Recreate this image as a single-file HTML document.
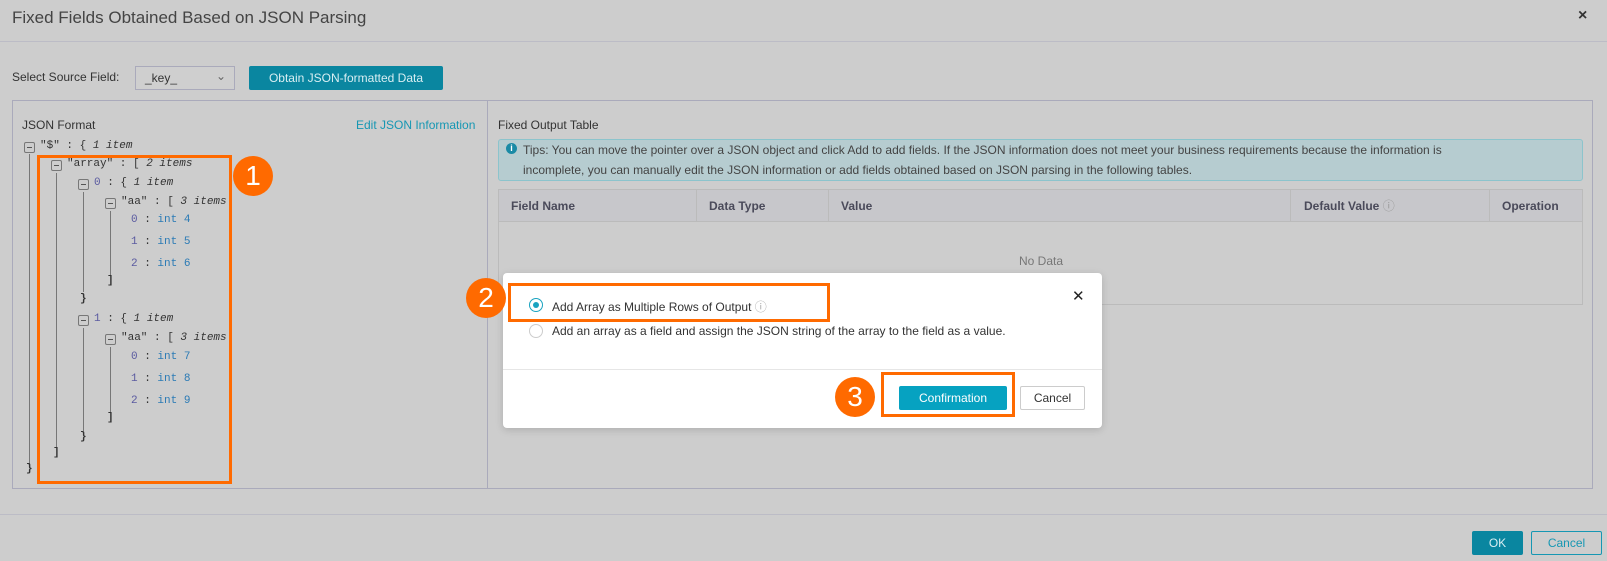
<!DOCTYPE html>
<html><head><meta charset="utf-8"><style>
*{box-sizing:border-box;margin:0;padding:0}
body{width:1607px;height:561px;background:#cdcdcd;font-family:"Liberation Sans",sans-serif;font-size:12px;color:#333;position:relative;overflow:hidden}
.a{position:absolute;white-space:nowrap}
.t{font-family:"Liberation Mono",monospace;font-size:11px;color:#333}
.k{color:#5a5aa0}.v{color:#2a7ab5}
.tg{position:absolute;width:11px;height:11px;border:1px solid #777;border-radius:2px}
.tg:after{content:"";position:absolute;left:2px;right:2px;top:4px;height:1px;background:#555}
.vl{position:absolute;width:1px;background:#777}
.ob{position:absolute;border:3px solid #ff6a00}
.ci{position:absolute;width:40px;height:40px;border-radius:50%;background:#ff6a00;color:#fff;font-size:28px;text-align:center;line-height:40px}
.th{position:absolute;top:190px;height:32px;line-height:32px;font-weight:bold;color:#4a4a5a}
.cb{position:absolute;top:190px;height:32px;width:1px;background:#bbb}
</style></head><body>
<div class="a" style="left:12px;top:8px;font-size:17px;color:#444">Fixed Fields Obtained Based on JSON Parsing</div>
<div class="a" style="left:1578px;top:7px;font-size:16px;font-weight:bold">×</div>
<div class="a" style="left:0;top:41px;width:1607px;height:1px;background:#bcbcc6"></div>
<div class="a" style="left:12px;top:70px">Select Source Field:</div>
<div class="a" style="left:135px;top:66px;width:100px;height:24px;border:1px solid #aab;background:#cfcfcf;padding:4px 9px">_key_<span style="position:absolute;right:8px;top:2px;color:#666">⌄</span></div>
<div class="a" style="left:249px;top:66px;width:194px;height:24px;background:#0a86a0;color:#d8eef2;text-align:center;line-height:24px;border-radius:2px">Obtain JSON-formatted Data</div>
<div class="a" style="left:12px;top:100px;width:475px;height:389px;border:1px solid #aab;border-right:none"></div>
<div class="a" style="left:487px;top:100px;width:1106px;height:389px;border:1px solid #aab"></div>
<div class="a" style="left:22px;top:118px;color:#333">JSON Format</div>
<div class="a" style="left:356px;top:118px;color:#1697b3">Edit JSON Information</div>
<div class="tg" style="left:24px;top:142px"></div><div class="a t" style="left:40px;top:140px">"$" : { <i>1 item</i></div>
<div class="vl" style="left:29px;top:154px;height:314px"></div>
<div class="tg" style="left:51px;top:160px"></div><div class="a t" style="left:67px;top:158px">"array" : [ <i>2 items</i></div>
<div class="vl" style="left:56px;top:173px;height:275px"></div>
<div class="tg" style="left:78px;top:179px"></div><div class="a t" style="left:94px;top:177px"><span class="k">0</span> : { <i>1 item</i></div>
<div class="vl" style="left:83px;top:192px;height:100px"></div>
<div class="tg" style="left:105px;top:198px"></div><div class="a t" style="left:121px;top:196px">"aa" : [ <i>3 items</i></div>
<div class="vl" style="left:110px;top:211px;height:65px"></div>
<div class="a t" style="left:131px;top:214px"><span class="k">0</span> : <span class="v">int 4</span></div>
<div class="a t" style="left:131px;top:236px"><span class="k">1</span> : <span class="v">int 5</span></div>
<div class="a t" style="left:131px;top:258px"><span class="k">2</span> : <span class="v">int 6</span></div>
<div class="a t" style="left:107px;top:275px"><b>]</b></div>
<div class="a t" style="left:80px;top:293px"><b>}</b></div>
<div class="tg" style="left:78px;top:315px"></div><div class="a t" style="left:94px;top:313px"><span class="k">1</span> : { <i>1 item</i></div>
<div class="vl" style="left:83px;top:328px;height:103px"></div>
<div class="tg" style="left:105px;top:334px"></div><div class="a t" style="left:121px;top:332px">"aa" : [ <i>3 items</i></div>
<div class="vl" style="left:110px;top:347px;height:65px"></div>
<div class="a t" style="left:131px;top:351px"><span class="k">0</span> : <span class="v">int 7</span></div>
<div class="a t" style="left:131px;top:373px"><span class="k">1</span> : <span class="v">int 8</span></div>
<div class="a t" style="left:131px;top:395px"><span class="k">2</span> : <span class="v">int 9</span></div>
<div class="a t" style="left:107px;top:412px"><b>]</b></div>
<div class="a t" style="left:80px;top:431px"><b>}</b></div>
<div class="a t" style="left:53px;top:447px"><b>]</b></div>
<div class="a t" style="left:26px;top:463px"><b>}</b></div>
<div class="ob" style="left:37px;top:155px;width:195px;height:329px"></div>
<div class="ci" style="left:233px;top:156px">1</div>
<div class="a" style="left:498px;top:118px;color:#333">Fixed Output Table</div>
<div class="a" style="left:498px;top:139px;width:1085px;height:42px;background:#b6ccd0;border:1px solid #8cc4cc;border-radius:3px"></div>
<div class="a" style="left:506px;top:143px;width:11px;height:11px;border-radius:50%;background:#1a8aa5;color:#fff;font-size:9px;text-align:center;line-height:11px;font-weight:bold">i</div>
<div class="a" style="left:523px;top:140px;line-height:20px;color:#444">Tips: You can move the pointer over a JSON object and click Add to add fields. If the JSON information does not meet your business requirements because the information is<br>incomplete, you can manually edit the JSON information or add fields obtained based on JSON parsing in the following tables.</div>
<div class="a" style="left:498px;top:189px;width:1085px;height:116px;border:1px solid #bbb"></div>
<div class="a" style="left:499px;top:190px;width:1083px;height:32px;background:#c7c7cb;border-bottom:1px solid #bbb"></div>
<div class="th" style="left:511px">Field Name</div>
<div class="cb" style="left:696px"></div><div class="th" style="left:709px">Data Type</div>
<div class="cb" style="left:828px"></div><div class="th" style="left:841px">Value</div>
<div class="cb" style="left:1290px"></div><div class="th" style="left:1304px">Default Value <span style="font-weight:normal;color:#999">ⓘ</span></div>
<div class="cb" style="left:1489px"></div><div class="th" style="left:1502px">Operation</div>
<div class="a" style="left:1019px;top:254px;color:#777">No Data</div>
<div class="a" style="left:0;top:514px;width:1607px;height:1px;background:#bcbcc6"></div>
<div class="a" style="left:1472px;top:531px;width:51px;height:24px;background:#0a86a0;color:#d8eef2;text-align:center;line-height:24px;border-radius:2px">OK</div>
<div class="a" style="left:1531px;top:531px;width:71px;height:24px;border:1px solid #1697b3;color:#1697b3;text-align:center;line-height:22px;border-radius:2px">Cancel</div>
<div class="a" style="left:503px;top:273px;width:599px;height:155px;background:#fff;border-radius:4px;box-shadow:0 2px 8px rgba(0,0,0,.15)"></div>
<div class="a" style="left:503px;top:369px;width:599px;height:1px;background:#e6e6e6"></div>
<div class="a" style="left:1072px;top:287px;font-size:15px;color:#222">✕</div>
<div class="a" style="left:529px;top:298px;width:14px;height:14px;border-radius:50%;border:1px solid #1aa3c0"></div>
<div class="a" style="left:533px;top:302px;width:6px;height:6px;border-radius:50%;background:#1aa3c0"></div>
<div class="a" style="left:552px;top:298px;color:#333">Add Array as Multiple Rows of Output <span style="color:#aaa">ⓘ</span></div>
<div class="a" style="left:529px;top:324px;width:14px;height:14px;border-radius:50%;border:1px solid #ccc"></div>
<div class="a" style="left:552px;top:324px;color:#333">Add an array as a field and assign the JSON string of the array to the field as a value.</div>
<div class="a" style="left:899px;top:386px;width:108px;height:24px;background:#06a2c1;color:#fff;text-align:center;line-height:24px;border-radius:2px">Confirmation</div>
<div class="a" style="left:1020px;top:386px;width:65px;height:24px;border:1px solid #ccc;color:#333;text-align:center;line-height:22px;border-radius:2px">Cancel</div>
<div class="ob" style="left:508px;top:283px;width:322px;height:39px"></div>
<div class="ci" style="left:466px;top:278px">2</div>
<div class="ob" style="left:881px;top:372px;width:134px;height:45px"></div>
<div class="ci" style="left:835px;top:377px">3</div>
</body></html>
